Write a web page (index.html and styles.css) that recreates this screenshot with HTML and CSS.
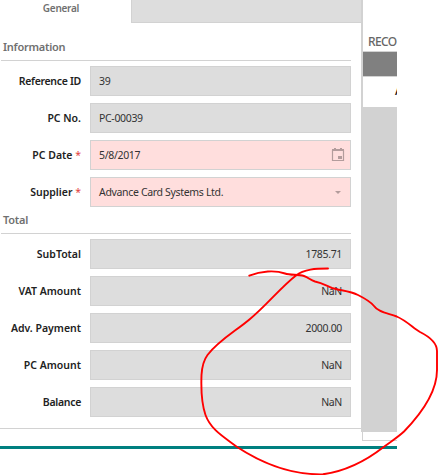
FILE: index.html
```html
<!DOCTYPE html>
<html lang="en">
<head>
<meta charset="utf-8">
<title>Purchase</title>
<link rel="stylesheet" href="styles.css">
</head>
<body>
<main class="window">
  <section class="form-panel">
    <nav class="tabs"><div class="tab">General</div><div class="tab-rest"></div></nav>
    <h2 class="heading info">Information</h2>
    <div class="fields">
      <div class="row"><label>Reference ID</label><div class="field">39</div></div>
      <div class="row"><label class="wide">PC No.</label><div class="field">PC-00039</div></div>
      <div class="row"><label class="wide">PC Date <i>*</i></label><div class="field required">5/8/2017
        <svg class="calendar" width="14" height="14" viewBox="0 0 14 14"><path d="M1.500 2.500h11v10h-11z" fill="none" stroke="#b39c9c" stroke-width="1.2"/><path d="M1 1h12v2H1zM3 0h2v2H3zM9 0h2v2H9zM7 8h4v3H7z" fill="#b39c9c"/></svg></div></div>
      <div class="row"><label class="wide">Supplier <i>*</i></label><div class="field required">Advance Card Systems Ltd.
        <svg class="arrow" width="6" height="3" viewBox="0 0 6 3"><path d="M0 0h6L3 3z" fill="#b39c9c"/></svg></div></div>
    </div>
    <h2 class="heading total">Total</h2>
    <div class="fields">
      <div class="row"><label class="wide">SubTotal</label><div class="field amount">1785.71</div></div>
      <div class="row"><label class="wide">VAT Amount</label><div class="field amount">NaN</div></div>
      <div class="row"><label class="wide">Adv. Payment</label><div class="field amount">2000.00</div></div>
      <div class="row"><label class="wide">PC Amount</label><div class="field amount">NaN</div></div>
      <div class="row"><label>Balance</label><div class="field amount">NaN</div></div>
    </div>
  </section>
  <aside class="records">
    <div class="records-title">RECO</div>
    <div class="records-bar"></div>
    <div class="records-head">A</div>
    <div class="records-body"></div>
    <div class="records-foot"></div>
  </aside>
</main>
<div class="base-line"></div>
<svg class="marker" width="438" height="475" viewBox="0 0 438 475"><path d="M249.3 275.7C261 271 275 270 285 273.500C291 275.500 298 274 304 276C309 277.700 310 280 315 281.500C322 283 326 285.500 332 288C340 290.500 350 291 358 295C364 298 370 301 374 306C378 312 387 313 396.700 316.500C407 321 413 328 420 332C428 336 437 342 437 351V370C437 392 421 414 404 431.500C397 438 390 442 383.300 447.300C367 460 347 471 323 474.300C290 475 260 462 236.700 446.700C224 437 211 430 205.500 415C201 402 201 388 201.500 375C202 367 203 361 207.500 355C219 340 236 331 250 319C266 306 281 287 296 275.500C304 269 316 268.500 328 268.500"/></svg>
</body>
</html>
```
FILE: styles.css
```css
* { box-sizing: border-box; }
body { margin: 0; width: 438px; height: 475px; overflow: hidden; background: #fff; font: 11px "Noto Sans", "Open Sans", sans-serif; color: #333; }
.window { display: flex; width: 397px; height: 441px; overflow: hidden; }
.form-panel { width: 361px; height: 429px; border-bottom: 1px solid #d2d2d2; }
.tabs { display: flex; height: 23px; }
.tab { width: 131px; padding-right: 9px; text-align: center; font-size: 10px; font-weight: 600; line-height: 17px; letter-spacing: -.25px; color: #707070; }
.tab-rest { flex: 1; background: #ddd; border: solid #d2d2d2; border-width: 0 0 1px 1px; }
.heading { margin: 0 10px 0 1px; padding-left: 2px; border-bottom: 1px solid #d2d2d2; font-size: 11px; font-weight: 600; letter-spacing: -.25px; color: #707070; }
.info { height: 38px; line-height: 48px; }
.total { height: 27px; line-height: 26px; }
.fields { display: flex; flex-direction: column; gap: 7px; padding-top: 5px; }
.row { display: flex; height: 30px; line-height: 30px; }
label { width: 90px; padding-right: 9px; text-align: right; font-size: 10.5px; font-weight: 600; line-height: 31px; color: #222; letter-spacing: -.3px; white-space: nowrap; }
.wide { letter-spacing: 0; }
label i { color: #e34040; font-style: normal; font-weight: 400; }
.field { display: flex; align-items: center; justify-content: space-between; width: 261px; padding: 0 8px; border: 1px solid #d2d2d2; background: #ddd; font-size: 10.5px; line-height: 28px; letter-spacing: -.33px; }
.required { background: #ffdedd; }
.amount { justify-content: flex-end; }
.calendar { margin-right: -3px; }
.arrow { margin-right: 1px; }
.records { display: flex; flex-direction: column; width: 36px; height: 441px; overflow: hidden; }
.records-title { height: 52px; padding: 33px 0 0 5px; border: solid #d2d2d2; border-width: 0 0 1px 2px; font-size: 12px; line-height: 17px; font-weight: 500; color: #666; letter-spacing: -.6px; }
.records-bar { height: 25px; border: solid #d2d2d2; border-width: 0 0 1px 2px; background: #808080; }
.records-head { height: 30px; padding-left: 32px; border-left: 2px solid #d2d2d2; font-size: 10.5px; font-weight: 600; line-height: 29px; color: #222; }
.records-body { height: 325px; background: #d2d2d2; }
.records-foot { height: 9px; margin-left: 1px; border: solid #d2d2d2; border-width: 0 0 1px 1px; }
.base-line { width: 397px; height: 3px; margin-top: 5px; background: #008080; }
.marker { position: absolute; top: 0; left: 0; fill: none; stroke: #f00; stroke-width: 1.9; stroke-linecap: round; stroke-linejoin: round; }
```
